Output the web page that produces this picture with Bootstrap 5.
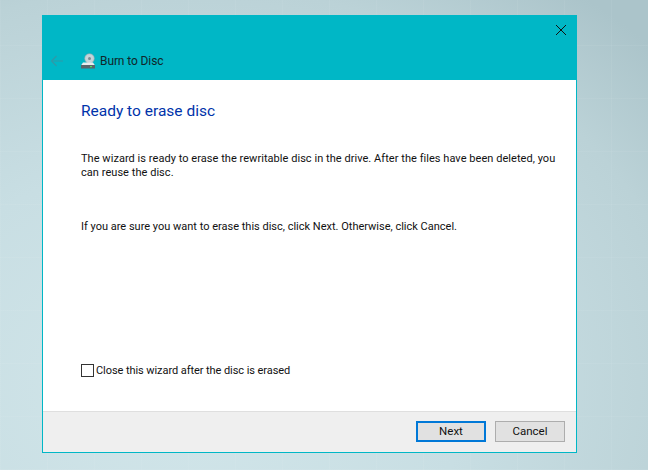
<!DOCTYPE html>
<html lang="en">
<head>
<meta charset="utf-8">
<title>Burn to Disc</title>
<link href="https://cdn.jsdelivr.net/npm/bootstrap@5.3.0/dist/css/bootstrap.min.css" rel="stylesheet">
<style>
html,body{height:100%;}
body{width:648px;height:470px;overflow:hidden;font-family:Roboto,"Noto Sans",sans-serif;font-size:11px;color:#111;padding:15px 71px 17px 42px;
background:
repeating-linear-gradient(90deg,rgba(255,255,255,.05) 0 1px,transparent 1px 47px),
repeating-linear-gradient(0deg,rgba(255,255,255,.05) 0 1px,transparent 1px 53px),
radial-gradient(ellipse 640px 500px at 28% 82%,#d2e6ea 0%,#c8dee3 45%,#bbd2d7 80%,#abc4ca 100%);}
.wiz-win{width:535px;height:438px;border:1px solid #00b7c6;background:#fff;}
.wiz-head{height:64px;background:#00b7c6;}
.wiz-close{top:8px;right:9px;width:12px;height:12px;}
.wiz-title{height:36px;padding-left:7px;padding-bottom:2px;}
.wiz-back{margin-right:16px;}
.wiz-name{margin-left:4px;color:#10262a;font-size:12px;letter-spacing:-.1px;}
.wiz-body{padding:21px 20px 0 38px;}
.wiz-h{font-size:15.5px;font-weight:400;color:#0033aa;margin:0 0 31px;line-height:20px;}
.wiz-p{margin:0;line-height:14px;letter-spacing:.045px;}
.wiz-gap{margin-top:40px;letter-spacing:0;}
.wiz-check{width:13px;height:13px;border:1px solid #333;background:#fff;margin-right:2px;}
.wiz-checkrow{padding-bottom:32px;letter-spacing:-.07px;}
.wiz-foot{height:41px;background:#efefef;border-top:1px solid #dfdfdf;padding:9px 11px 0 0;gap:9px;}
.wiz-btn{width:70px;height:21px;padding:0;font-size:11.5px;line-height:1;border:1px solid #adadad;background:#e1e1e1;border-radius:0;color:#111;}
.wiz-btn.wiz-def{border:2px solid #0078d7;}
</style>
</head>
<body>
<div class="wiz-win d-flex flex-column">
  <div class="wiz-head position-relative d-flex align-items-end flex-shrink-0">
    <svg class="wiz-close position-absolute" viewBox="0 0 12 12"><path d="M1 1L11 11M11 1L1 11" stroke="#111" stroke-width="1" fill="none"/></svg>
    <div class="wiz-title d-flex align-items-center">
      <svg class="wiz-back" width="14" height="12" viewBox="0 0 14 12"><path d="M13 6H1.5M6.5 1L1.5 6l5 5" stroke="#2f9aa8" stroke-width="1.2" fill="none"/></svg>
      <svg width="16" height="16" viewBox="0 0 16 16">
        <circle cx="9.5" cy="5.5" r="4.8" fill="#c4d4da" stroke="#8fa3aa" stroke-width=".6"/>
        <circle cx="9.5" cy="5.5" r="1.5" fill="#7d8c94"/>
        <path d="M3 9.5h10l2 3H1z" fill="#e8ecee"/>
        <rect x="1" y="12" width="14" height="3.5" fill="#59656c"/>
        <rect x="10" y="13" width="2" height="1.2" fill="#4fe05a"/>
      </svg>
      <span class="wiz-name">Burn to Disc</span>
    </div>
  </div>
  <div class="wiz-body flex-grow-1 d-flex flex-column">
    <h1 class="wiz-h">Ready to erase disc</h1>
    <p class="wiz-p">The wizard is ready to erase the rewritable disc in the drive. After the files have been deleted, you can reuse the disc.</p>
    <p class="wiz-p wiz-gap">If you are sure you want to erase this disc, click Next. Otherwise, click Cancel.</p>
    <div class="wiz-checkrow mt-auto d-flex align-items-center"><span class="wiz-check d-inline-block"></span><span>Close this wizard after the disc is erased</span></div>
  </div>
  <div class="wiz-foot d-flex justify-content-end flex-shrink-0">
    <button type="button" class="btn wiz-btn wiz-def">Next</button>
    <button type="button" class="btn wiz-btn">Cancel</button>
  </div>
</div>
</body>
</html>
